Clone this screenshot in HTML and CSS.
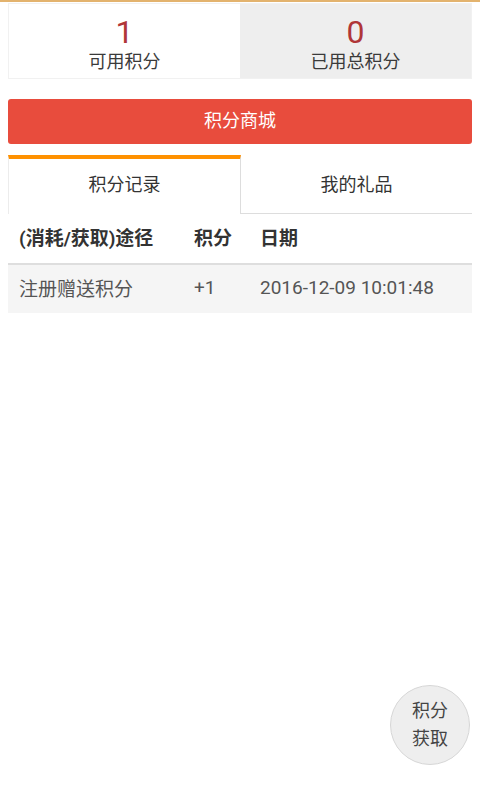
FILE: index.html
```html
<!DOCTYPE html>
<html lang="zh-CN">
<head>
<meta charset="utf-8">
<meta name="viewport" content="width=480">
<title>积分</title>
<link rel="stylesheet" href="styles.css">
</head>
<body>
<div class="topline"></div>
<div class="stats">
  <div class="stat">
    <div class="stat-num">1</div>
    <div class="stat-label">可用积分</div>
  </div>
  <div class="stat stat-used">
    <div class="stat-num">0</div>
    <div class="stat-label">已用总积分</div>
  </div>
</div>
<div class="mall-btn">积分商城</div>
<div class="tabs">
  <div class="tab tab-active">积分记录</div>
  <div class="tab">我的礼品</div>
</div>
<div class="table">
  <div class="row row-head">
    <div class="cell">(消耗/获取)途径</div>
    <div class="cell">积分</div>
    <div class="cell">日期</div>
  </div>
  <div class="row row-data">
    <div class="cell">注册赠送积分</div>
    <div class="cell">+1</div>
    <div class="cell">2016-12-09 10:01:48</div>
  </div>
</div>
<div class="fab">积分<br>获取</div>
</body>
</html>
```

FILE: styles.css
```css
html, body {
  margin: 0;
  padding: 0;
  background: #ffffff;
}
body {
  font-family: Roboto, "Noto Sans CJK SC", sans-serif;
  color: #333333;
}
.topline {
  height: 2px;
  background: #e3b36e;
}
.stats {
  display: flex;
  margin: 1px 8px 0;
  border: 1px solid #f1f1f1;
  height: 74px;
}
.stat {
  flex: 1;
  display: flex;
  flex-direction: column;
  align-items: center;
  padding-top: 11px;
  box-sizing: border-box;
}
.stat-used {
  background: #eeeeee;
}
.stat-num {
  font-size: 32px;
  line-height: 34px;
  color: #b03638;
}
.stat-label {
  margin-top: 2px;
  font-size: 18px;
  line-height: 22px;
  color: #3a3a3a;
}
.mall-btn {
  margin: 20px 8px 0;
  height: 45px;
  line-height: 43px;
  background: #e84c3d;
  border-radius: 3px;
  color: #ffffff;
  font-size: 18px;
  text-align: center;
}
.tabs {
  display: flex;
  margin: 11px 8px 0;
}
.tab {
  flex: 1;
  height: 59px;
  box-sizing: border-box;
  display: flex;
  align-items: center;
  justify-content: center;
  font-size: 18px;
  color: #333333;
  border-bottom: 1px solid #dddddd;
  padding-top: 3px;
  padding-bottom: 6px;
}
.tab-active {
  border-top: 4px solid #ff9100;
  border-left: 1px solid #ececec;
  border-right: 1px solid #dddddd;
  border-bottom: none;
  padding-top: 0;
  padding-bottom: 7px;
}
.table {
  margin: 0 8px;
}
.row {
  display: grid;
  grid-template-columns: 175px 66px 1fr;
  align-items: center;
}
.cell {
  padding-left: 11px;
  font-size: 19px;
  white-space: nowrap;
}
.row-head {
  height: 51px;
  box-sizing: border-box;
  border-bottom: 2px solid #dedede;
  font-weight: bold;
  color: #333333;
  padding-bottom: 5px;
}
.row-data {
  height: 48px;
  background: #f5f5f5;
  color: #555555;
  padding-bottom: 3px;
  box-sizing: border-box;
}
.fab {
  position: fixed;
  right: 10px;
  bottom: 35px;
  width: 80px;
  height: 80px;
  box-sizing: border-box;
  border-radius: 50%;
  background: #eeeeee;
  border: 1px solid #d6d6d6;
  display: flex;
  align-items: center;
  justify-content: center;
  text-align: center;
  font-size: 18px;
  line-height: 28px;
  color: #444444;
}
```
